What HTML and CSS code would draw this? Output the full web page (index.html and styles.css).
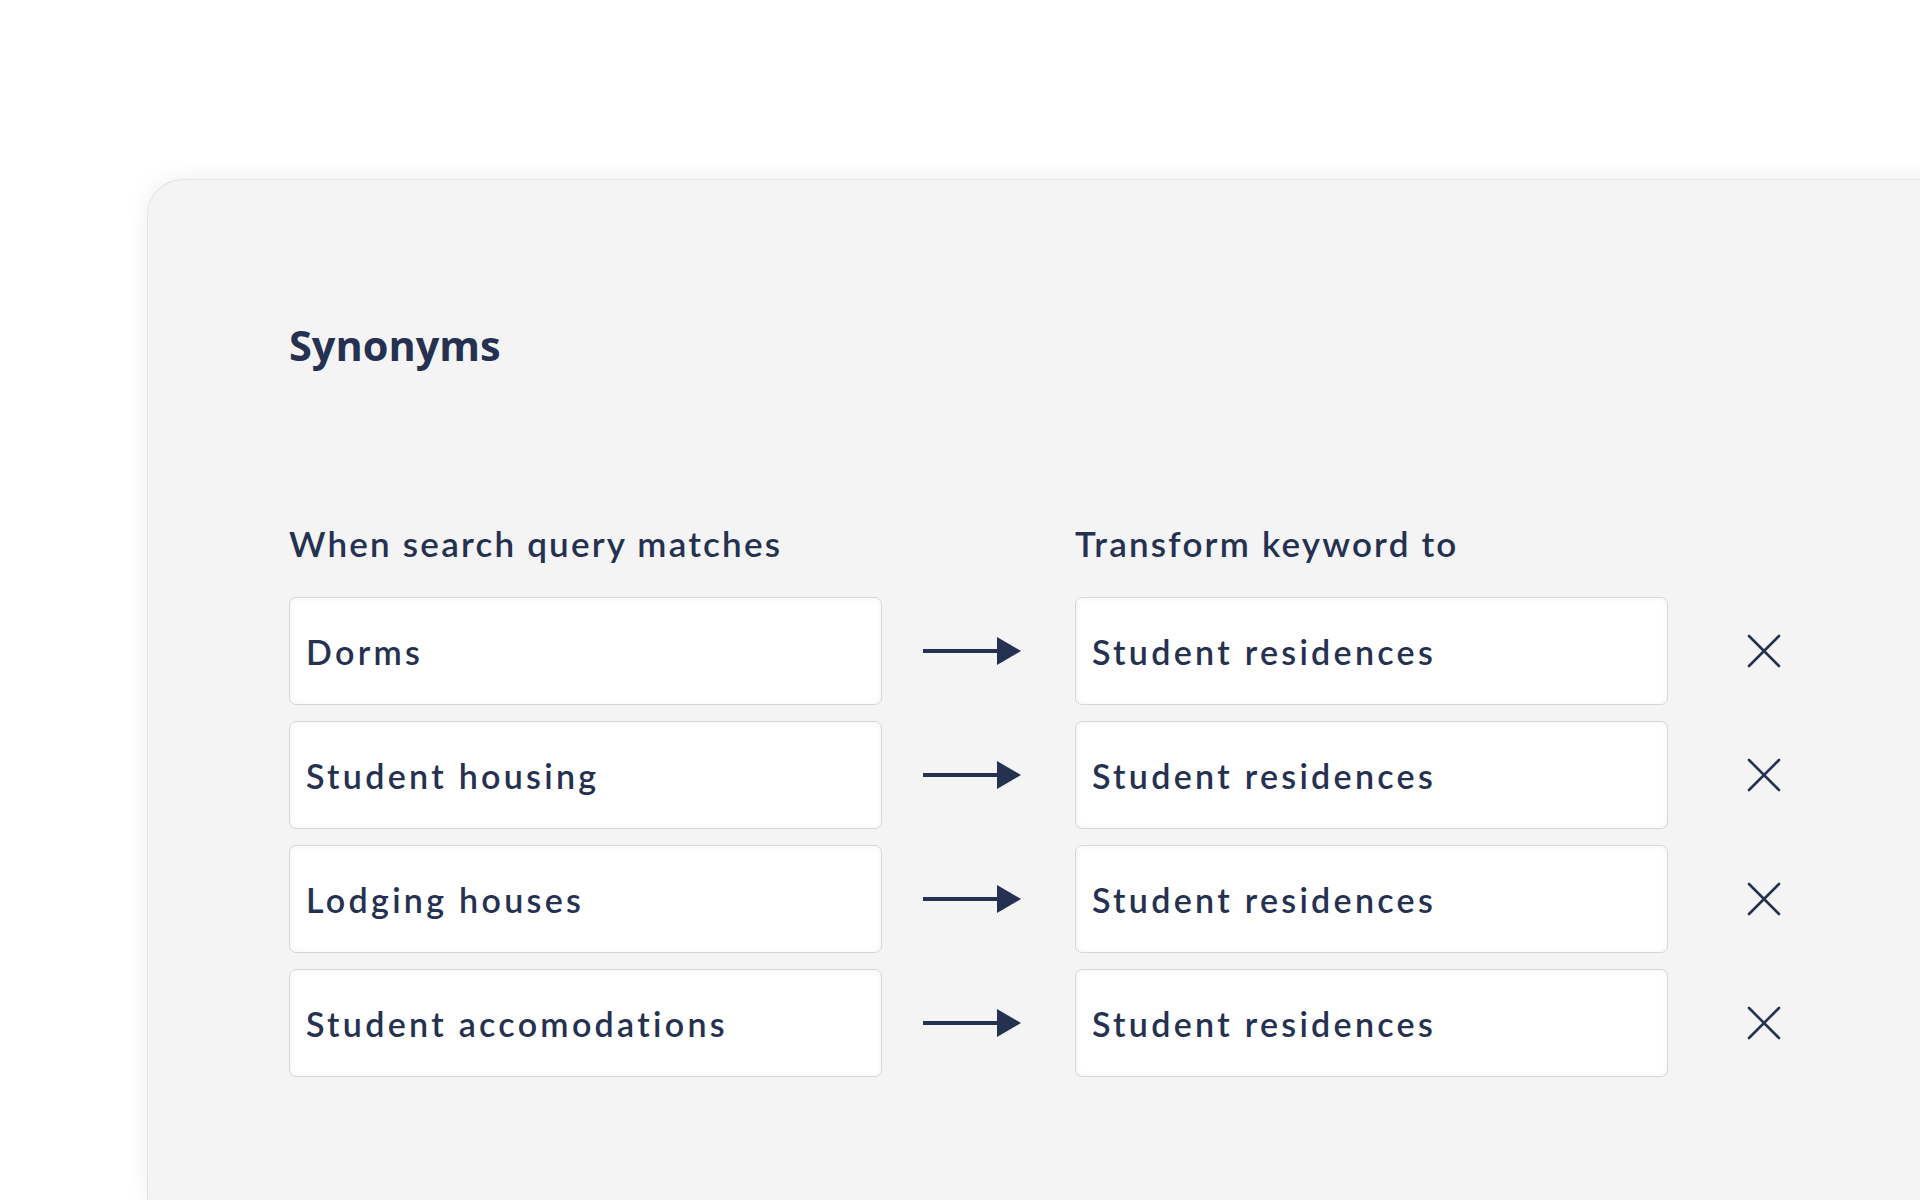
FILE: index.html
```html
<!DOCTYPE html>
<html lang="en">
<head>
<meta charset="utf-8">
<title>Synonyms</title>
<link rel="stylesheet" href="styles.css">
</head>
<body>
<main class="card">
  <h1 class="title">Synonyms</h1>
  <div class="grid">
    <div class="label">When search query matches</div>
    <div></div>
    <div class="label">Transform keyword to</div>
    <div></div>

    <div class="field">Dorms</div>
    <div class="arrow"><svg width="98" height="28" viewBox="0 0 98 28"><rect x="0" y="12" width="76" height="4" fill="#253150"/><path d="M74 0 L98 14 L74 28 Z" fill="#253150"/></svg></div>
    <div class="field">Student residences</div>
    <button class="remove" aria-label="Remove"><svg width="34" height="34" viewBox="0 0 34 34"><path d="M2 2 L32 32 M32 2 L2 32" stroke="#253150" stroke-width="2.6" stroke-linecap="round" fill="none"/></svg></button>

    <div class="field">Student housing</div>
    <div class="arrow"><svg width="98" height="28" viewBox="0 0 98 28"><rect x="0" y="12" width="76" height="4" fill="#253150"/><path d="M74 0 L98 14 L74 28 Z" fill="#253150"/></svg></div>
    <div class="field">Student residences</div>
    <button class="remove" aria-label="Remove"><svg width="34" height="34" viewBox="0 0 34 34"><path d="M2 2 L32 32 M32 2 L2 32" stroke="#253150" stroke-width="2.6" stroke-linecap="round" fill="none"/></svg></button>

    <div class="field">Lodging houses</div>
    <div class="arrow"><svg width="98" height="28" viewBox="0 0 98 28"><rect x="0" y="12" width="76" height="4" fill="#253150"/><path d="M74 0 L98 14 L74 28 Z" fill="#253150"/></svg></div>
    <div class="field">Student residences</div>
    <button class="remove" aria-label="Remove"><svg width="34" height="34" viewBox="0 0 34 34"><path d="M2 2 L32 32 M32 2 L2 32" stroke="#253150" stroke-width="2.6" stroke-linecap="round" fill="none"/></svg></button>

    <div class="field">Student accomodations</div>
    <div class="arrow"><svg width="98" height="28" viewBox="0 0 98 28"><rect x="0" y="12" width="76" height="4" fill="#253150"/><path d="M74 0 L98 14 L74 28 Z" fill="#253150"/></svg></div>
    <div class="field">Student residences</div>
    <button class="remove" aria-label="Remove"><svg width="34" height="34" viewBox="0 0 34 34"><path d="M2 2 L32 32 M32 2 L2 32" stroke="#253150" stroke-width="2.6" stroke-linecap="round" fill="none"/></svg></button>
  </div>
</main>
</body>
</html>
```

FILE: styles.css
```css
html, body {
  margin: 0;
  padding: 0;
  background: #ffffff;
  overflow: hidden;
  height: 1200px;
}

body {
  font-family: "Lato", "Open Sans", sans-serif;
  color: #253150;
}

.card {
  box-sizing: border-box;
  margin: 179px 0 0 147px;
  width: 1860px;
  height: 1021px;
  background: #f4f4f4;
  border: 1px solid #e3e3e3;
  border-bottom: 0;
  border-radius: 36px 36px 0 0;
  box-shadow: 0 0 26px rgba(0, 0, 0, 0.07);
  padding: 137px 0 0 141px;
}

.title {
  margin: 0;
  font-family: "Open Sans", sans-serif;
  font-weight: 700;
  font-size: 41.5px;
  line-height: 57px;
  color: #253150;
}

.grid {
  margin-top: 148px;
  display: grid;
  grid-template-columns: 593px 193px 593px 113px;
  row-gap: 16px;
  align-items: center;
}

.label {
  font-size: 35px;
  font-weight: 600;
  letter-spacing: 2.2px;
  line-height: 42px;
  margin-bottom: 17px;
}

.field {
  box-sizing: border-box;
  height: 108px;
  background: #ffffff;
  border: 1px solid #d6d6d6;
  border-radius: 7px;
  box-shadow: inset 0 0 6px rgba(0, 0, 0, 0.05);
  display: flex;
  align-items: center;
  padding: 0 0 0 16px;
  font-size: 34px;
  font-weight: 600;
  letter-spacing: 3.3px;
  white-space: nowrap;
}

.arrow {
  display: flex;
  align-items: center;
  padding-left: 41px;
}

.arrow svg, .remove svg {
  display: block;
}

.remove {
  justify-self: start;
  margin-left: 79px;
  padding: 0;
  border: 0;
  background: none;
  cursor: pointer;
}
```
